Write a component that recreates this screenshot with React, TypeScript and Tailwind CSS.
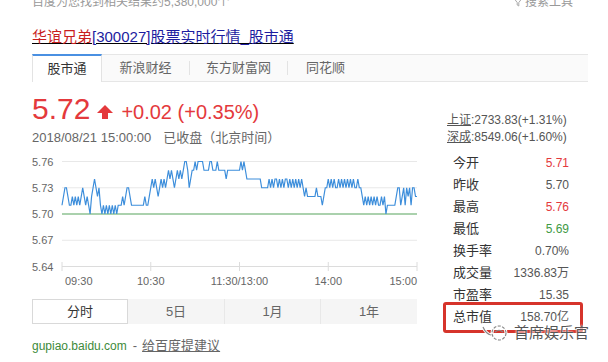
import React from 'react';

// intraday price steps, one digit per minute = cents above 5.70
const SERIES =
  '1233211212121232121023432310' +
  '101010101011' +
  '1212332' +
  '111111111' +
  '211' +
  '2343432' +
  '3434345454' +
  '3454545665' +
  '345565666' +
  '655556655' +
  '565555545' +
  '5555555' +
  '56565' +
  '4444444444' +
  '33333' +
  '43434434343443434343434' +
  '323222222322212' +
  '334343433434343434343343' +
  '32' +
  '121212121211212' +
  '0' +
  '111111' +
  '233123132313322';

const X0 = 30;
const X1 = 385;
const BASE_Y = 64;
const STEP = 8.75;

const yLabels = [
  { label: '5.76', y: 11.5 },
  { label: '5.73', y: 37.75 },
  { label: '5.70', y: 64 },
  { label: '5.67', y: 90.25 },
  { label: '5.64', y: 116.5 },
];

const quotes = [
  { name: '今开', value: '5.71', color: 'text-[#e4393c]' },
  { name: '昨收', value: '5.70', color: 'text-[#555]' },
  { name: '最高', value: '5.76', color: 'text-[#e4393c]' },
  { name: '最低', value: '5.69', color: 'text-[#3f9a45]' },
  { name: '换手率', value: '0.70%', color: 'text-[#555]' },
  { name: '成交量', value: '1336.83万', color: 'text-[#555]' },
  { name: '市盈率', value: '15.35', color: 'text-[#555]' },
  { name: '总市值', value: '158.70亿', color: 'text-[#555]' },
];

function PriceChart() {
  const n = SERIES.length - 1;
  const points = SERIES.split('')
    .map((c, i) => {
      const x = X0 + (i * (X1 - X0)) / n;
      const y = BASE_Y - Number(c) * STEP;
      return `${x.toFixed(2)},${y.toFixed(2)}`;
    })
    .join(' ');
  const ticks = [X0, X0 + 88.75, X0 + 177.5, X0 + 266.25, X1];

  return (
    <svg width="386" height="140" className="mt-[4px] block">
      {yLabels.map((l) => (
        <g key={l.label}>
          {l.label !== '5.70' && (
            <line x1={X0} x2={X1} y1={l.y} y2={l.y} stroke={l.label === '5.64' ? '#dcdcdc' : '#e8e8e8'} strokeWidth="1" />
          )}
          <text x="0" y={l.y + 4} fontSize="11" fill="#666" fontFamily="Liberation Sans, Arial, sans-serif">
            {l.label}
          </text>
        </g>
      ))}
      {ticks.map((x) => (
        <line key={x} x1={x} x2={x} y1="112" y2="121" stroke="#dcdcdc" strokeWidth="1" />
      ))}
      <line x1={X0} x2={X1} y1={BASE_Y} y2={BASE_Y} stroke="#56a35c" strokeWidth="1.2" />
      <polyline points={points} fill="none" stroke="#3d8edb" strokeWidth="1.2" strokeLinejoin="miter" />
      <g fontSize="11" fill="#666" fontFamily="Liberation Sans, Arial, sans-serif">
        <text x="33" y="135">09:30</text>
        <text x="118.75" y="135" textAnchor="middle">10:30</text>
        <text x="207.5" y="135" textAnchor="middle">11:30/13:00</text>
        <text x="296.25" y="135" textAnchor="middle">14:00</text>
        <text x="385" y="135" textAnchor="end">15:00</text>
      </g>
    </svg>
  );
}

export default function App() {
  return (
    <div className="relative h-[362px] w-[608px] overflow-hidden bg-white font-['Liberation_Sans','Noto_Sans_CJK_SC',sans-serif]">
      <div className="px-8">
        {/* result count + search tools */}
        <div className="-mt-[6px] flex h-4 items-center justify-between pr-[3px] text-[12px] leading-4 text-[#999]">
          <span>百度为您找到相关结果约5,380,000个</span>
          <span className="flex items-center gap-[3px]">
            <svg width="8" height="9" viewBox="0 0 8 9">
              <path d="M0.5 1 H7.5 L4.8 4.5 V8 L3.2 7 V4.5 Z" fill="none" stroke="#aaa" strokeWidth="1" />
            </svg>
            搜索工具
          </span>
        </div>

        {/* result title */}
        <div className="mt-[17px] text-[15px] leading-5 underline">
          <span className="text-[#c81e1e]">华谊兄弟</span>
          <span className="text-[#1c1ca0]">[300027]股票实时行情_股市通</span>
        </div>

        {/* source tabs */}
        <div className="mt-[7px] flex h-[28px] w-[556px] text-[13px]">
          <div className="flex w-[70px] items-center justify-center border-x border-t-2 border-x-[#e3e3e3] border-t-[#4a90e2] bg-white text-[#333]">
            股市通
          </div>
          <div className="flex flex-1 items-center border-y border-[#e6e6e6] bg-[#fafafa] text-[#666]">
            <span className="w-[87px] text-center">新浪财经</span>
            <span className="h-[14px] w-px bg-[#e3e3e3]" />
            <span className="w-[97px] text-center">东方财富网</span>
            <span className="h-[14px] w-px bg-[#e3e3e3]" />
            <span className="w-[75px] text-center">同花顺</span>
          </div>
        </div>

        <div className="mt-[12px] flex">
          {/* quote + chart */}
          <div className="w-[386px]">
            <div className="flex h-[30px] items-baseline text-[#e4393c]">
              <span className="text-[30px] leading-[30px]">5.72</span>
              <svg width="16" height="14" viewBox="0 0 16 14" className="mb-[2px] ml-[7px]">
                <polygon points="8,0 16,8 11,8 11,14 5,14 5,8 0,8" fill="#e4393c" />
              </svg>
              <span className="ml-[8px] text-[20px] leading-[30px]">+0.02 (+0.35%)</span>
            </div>
            <div className="mt-[6px] flex h-4 items-center text-[13px] leading-4 text-[#666]">
              <span>2018/08/21 15:00:00</span>
              <span className="ml-[12px]">已收盘</span>
              <span>（北京时间）</span>
            </div>

            <PriceChart />

            {/* period switch */}
            <div className="mt-[9px] flex h-[25px] w-[385px] text-[13px]">
              <div className="flex w-[96px] items-center justify-center border border-[#d9d9d9] bg-white text-[#333]">分时</div>
              <div className="flex w-[97px] items-center justify-center border-r border-[#e8e8e8] bg-[#f5f5f5] text-[#666]">5日</div>
              <div className="flex w-[96px] items-center justify-center border-r border-[#e8e8e8] bg-[#f5f5f5] text-[#666]">1月</div>
              <div className="flex w-[96px] items-center justify-center bg-[#f5f5f5] text-[#666]">1年</div>
            </div>

            <div className="mt-[14px] flex h-4 items-center leading-4">
              <span className="text-[12px] text-[#3d8a3a]">gupiao.baidu.com</span>
              <span className="ml-[6px] text-[13px] text-[#666]">-</span>
              <span className="ml-[5px] text-[13px] text-[#666] underline">给百度提建议</span>
            </div>
          </div>

          {/* index + stats */}
          <div className="ml-[29px] w-[123px] pt-[18px]">
            <div className="text-[12px] leading-[17px] text-[#555]">
              <span className="underline">上证</span>:2733.83(+1.31%)
            </div>
            <div className="text-[12px] leading-[17px] text-[#555]">
              <span className="underline">深成</span>:8549.06(+1.60%)
            </div>
            <div className="mt-[6px]">
              {quotes.map((q) => (
                <div key={q.name} className="flex h-[22px] items-center justify-between pl-[6px] pr-px">
                  <span className="text-[13px] text-[#333]">{q.name}</span>
                  <span className={`text-[12px] ${q.color}`}>{q.value}</span>
                </div>
              ))}
            </div>
          </div>
        </div>
      </div>

      {/* highlight around market cap */}
      <div className="absolute left-[443px] top-[302px] h-[31px] w-[140px] rounded-[3px] border-[3px] border-[#d6342b]" />

      {/* account watermark */}
      <div className="absolute left-[480px] top-[324px] flex items-center">
        <svg width="30" height="18" viewBox="0 0 30 18">
          <path d="M3 3 Q6 10 11 11" fill="none" stroke="#fff" strokeWidth="3" />
          <path d="M3 3 Q6 10 11 11" fill="none" stroke="#888" strokeWidth="1.2" />
          <circle cx="19" cy="9" r="7" fill="none" stroke="#fff" strokeWidth="3" />
          <circle cx="19" cy="9" r="7" fill="none" stroke="#888" strokeWidth="1.2" strokeDasharray="3 1.5" />
          <path d="M15 8 Q19 4.5 23 8" fill="none" stroke="#888" strokeWidth="1.1" />
        </svg>
        <span className="ml-[4px] text-[15px] leading-4 text-[#555] [text-shadow:0_0_2px_#fff,0_0_2px_#fff]">
          首席娱乐官
        </span>
      </div>
    </div>
  );
}
